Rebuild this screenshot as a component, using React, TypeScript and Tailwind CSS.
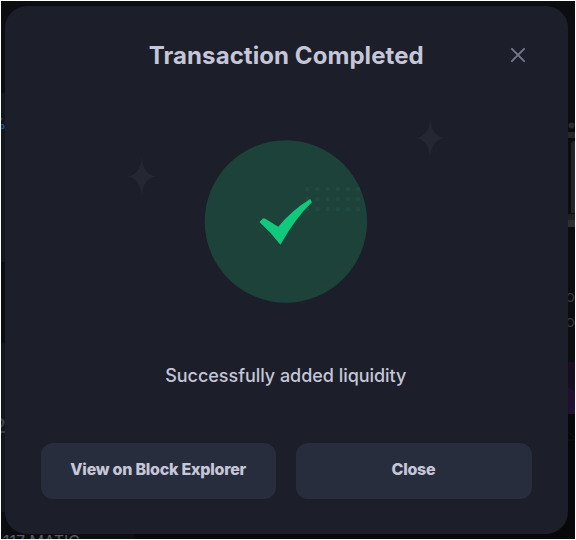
function Backdrop() {
  return (
    <div
      className="absolute inset-0 flex flex-col overflow-hidden border border-white bg-[#0b0d11]"
      aria-hidden="true"
    >
      <div className="flex h-[530px] shrink-0 justify-between">
        <div className="flex w-3 flex-col overflow-hidden pt-[92px]">
          <div className="flex h-[169px] shrink-0 justify-end bg-[#10181e] pt-[21px] pr-[7px] text-[15px] leading-5 font-bold text-[#1a4ba3]">
            <span>%</span>
          </div>
          <div className="mt-[81px] flex h-[169px] shrink-0 justify-end bg-[#10181e] pt-[71px] pr-[7px] text-[20px] leading-6 font-semibold text-[#3a4046]">
            <span>2</span>
          </div>
        </div>
        <div className="flex w-[15px] flex-col pt-[114px]">
          <svg className="block shrink-0" width="15" height="115" viewBox="0 0 15 115">
            <circle cx="11.5" cy="10.5" r="3" fill="#282b2f" />
            <path d="M6 17H15V23H6Z" fill="#25272a" />
            <path d="M11 30Q11 26 15 26V98H11Z" fill="#242629" />
            <path d="M6 99H15V105H6Z" fill="#1f2021" />
            <path d="M6 105H15V112H6Z" fill="#303030" />
          </svg>
          <div className="mt-[54px] flex h-[78px] shrink-0 flex-col items-end text-[16px] leading-[25px] text-[#343840]">
            <span>o</span>
            <span>o</span>
          </div>
          <svg className="block shrink-0" width="15" height="169" viewBox="0 0 15 169">
            <path d="M0 0H15V52H0Z" fill="#190d20" />
            <path d="M6 26Q10 26 15 29V52H6Z" fill="#221030" />
            <path d="M0 52H15V169H0Z" fill="#08080b" />
            <path d="M6 68L15 76M6 78H15" stroke="#121116" />
          </svg>
        </div>
      </div>
      <div className="flex h-5 shrink-0 pl-[2px] text-[16px] leading-5 whitespace-nowrap text-[#595c63]">
        <span className="w-[132px]">117 MATIC</span>
        <span className="h-5 flex-1 bg-[#08080b]" />
      </div>
    </div>
  );
}

function Sparkle({ x, y }: { x: number; y: number }) {
  return (
    <path
      transform={`translate(${x} ${y})`}
      d="M0-19.5C.8-9 4.5-1.5 14.5 0C4.5 1.5 .8 9 0 19.5C-.8 9-4.5 1.5-14.5 0C-4.5-1.5-.8-9 0-19.5Z"
      fill="#252733"
    />
  );
}

function SuccessArt() {
  const columns = [307.7, 317.8, 328, 338.1, 348.2, 358.4];
  const rows = [189, 199.1, 209.3];
  return (
    <svg className="block h-[200px] w-[320px]" viewBox="126.3 110 320 200" aria-hidden="true">
      <Sparkle x={142} y={176.5} />
      <Sparkle x={430.5} y={138} />
      <circle cx="286.2" cy="221.5" r="81.2" fill="#1c4239" />
      <g fill="#234a42">
        {rows.map((y) => columns.map((x) => <circle key={`${x}-${y}`} cx={x} cy={y} r="2.2" />))}
      </g>
      <path
        d="M259.7 222L263.2 218.6Q264 217.8 265.2 218.4L278.6 226.8Q292.5 210 310.5 199.1L312.2 202.3Q296 217.5 280.7 244.8Q271.5 232.5 259.7 222Z"
        fill="#10c97c"
      />
    </svg>
  );
}

function ActionButton({ children }: { children: string }) {
  return (
    <button className="flex h-14 items-center justify-center rounded-xl bg-[#282d3d] pr-px pb-[3px] text-base font-extrabold tracking-[-0.25px] text-[#c5c7d8]">
      {children}
    </button>
  );
}

export default function App() {
  return (
    <div className="relative h-[540px] w-[576px] overflow-hidden bg-white font-['Inter',sans-serif]">
      <Backdrop />
      <div className="relative flex h-full w-full pt-[5.6px] pl-[5px]">
        <section
          role="dialog"
          className="flex h-[528.6px] w-[562.6px] flex-col items-center rounded-[22px] bg-[#1c1e29] px-[36px] pt-[34px]"
        >
          <header className="grid w-full grid-cols-[26px_1fr_26px] items-center">
            <h1 className="col-start-2 text-center text-[24px] leading-8 font-bold tracking-[0.07px] whitespace-nowrap text-[#c5c7d8]">
              Transaction Completed
            </h1>
            <button aria-label="Dismiss" className="flex justify-start pb-px">
              <svg width="24" height="24" viewBox="0 0 24 24" stroke="#74768c" strokeWidth="2" strokeLinecap="round">
                <path d="M5.9 5.9L18.1 18.1M18.1 5.9L5.9 18.1" />
              </svg>
            </button>
          </header>
          <div className="mt-[38.4px]">
            <SuccessArt />
          </div>
          <p className="mt-[52px] pr-px text-[18px] leading-7 font-medium tracking-[-0.04px] text-[#c5c7d8]">
            Successfully added liquidity
          </p>
          <div className="mt-[53px] grid w-full grid-cols-2 gap-5">
            <ActionButton>View on Block Explorer</ActionButton>
            <ActionButton>Close</ActionButton>
          </div>
        </section>
      </div>
    </div>
  );
}
